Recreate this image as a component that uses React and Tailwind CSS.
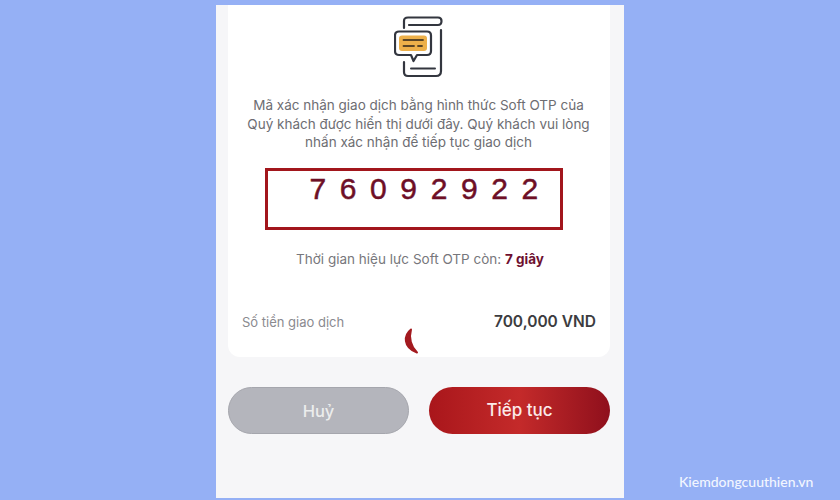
import React from 'react';

const font = { fontFamily: 'Inter, "Noto Sans", sans-serif' };

const OtpIcon = () => (
  <svg width="50" height="62" viewBox="0 0 50 62" fill="none" className="block">
    {/* phone body, top cap */}
    <path d="M10 12 V5 Q10 1.5 14 1.5 H44 Q47.5 1.5 47.5 5 Q47.5 9 44 9 H15" stroke="#33363f" strokeWidth="2.2" strokeLinecap="round" strokeLinejoin="round" />
    {/* right side and bottom */}
    <path d="M47 14 V55 Q47 60 42 60 H14 Q10 60 10 56 V46" stroke="#33363f" strokeWidth="2.2" strokeLinecap="round" />
    <path d="M17 52.5 H41" stroke="#33363f" strokeWidth="2" strokeLinecap="round" />
    {/* chat bubble */}
    <path d="M5 15.5 H33 Q37 15.5 37 19.5 V35 Q37 39 33 39 H23 L19.5 45 L17 39 H5 Q1 39 1 35 V19.5 Q1 15.5 5 15.5 Z" fill="#fff" stroke="#33363f" strokeWidth="2.2" strokeLinejoin="round" />
    <rect x="5" y="19.5" width="28" height="15.5" rx="3" fill="#edb04a" />
    <path d="M9.5 24 H29 M9.5 30 H20 M24 30 H28" stroke="#5a4526" strokeWidth="1.8" strokeLinecap="round" />
  </svg>
);

const Spinner = () => (
  <svg width="18" height="28" viewBox="0 0 18 28" fill="none" className="block">
    <path d="M9 2.5 C2 8 0.5 20 15 25.5 C9 20 6.5 11 9 2.5 Z" fill="#a31a1f" stroke="#a31a1f" strokeWidth="2" strokeLinejoin="round" />
  </svg>
);

export default function App() {
  return (
    <div className="relative w-[840px] h-[500px] overflow-hidden bg-[#95b0f5] flex justify-center" style={font}>
      <div className="relative mt-[5px] w-[408px] h-[493px] bg-[#f6f6f8] pl-3 pr-[14px] flex flex-col">
        {/* card */}
        <div className="relative h-[352px] bg-white rounded-b-xl flex flex-col items-center">
          <div className="mt-[11px]"><OtpIcon /></div>

          <p className="mt-[18px] ml-[-1px] w-[382px] text-center text-[13.5px] leading-[18.5px] text-[#6d6d72]">
            Mã xác nhận giao dịch bằng hình thức Soft OTP của
            <br />
            Quý khách được hiển thị dưới đây. Quý khách vui lòng
            <br />
            nhấn xác nhận để tiếp tục giao dịch
          </p>

          <div className="mt-[16px] ml-[-11px] w-[298px] h-[62px] border-[3px] border-[#a2161c] pl-[42px] pt-[1px]">
            <span className="block text-[30px] leading-[34px] tracking-[13.6px] whitespace-nowrap text-[#6e0f26] [-webkit-text-stroke:0.5px_#6e0f26]" style={{ fontFamily: '"Liberation Sans", sans-serif' }}>
              76092922
            </span>
          </div>

          <p className="mt-[20px] ml-[2px] text-[13.5px] leading-[18px] text-[#77777c]">
            Thời gian hiệu lực Soft OTP còn: <span className="font-bold text-[#6e1030]">7 giây</span>
          </p>

          <div className="mt-[44px] w-full pl-[14px] pr-[14px] flex items-center justify-between">
            <span className="text-[13px] leading-[18px] text-[#8a8a8f]">Số tiền giao dịch</span>
            <span className="text-[15.5px] leading-[20px] font-semibold text-[#3c3c40]">700,000 VND</span>
          </div>

          {/* loading spinner lying over the card */}
          <div className="absolute left-[174px] top-[322px]"><Spinner /></div>
        </div>

        {/* buttons */}
        <div className="mt-[30px] flex justify-between">
          <button className="w-[181px] h-[47px] pt-px rounded-full bg-[#b4b5bc] border border-[#a5a6ad] text-[16.5px] font-medium text-[#eceded]">
            Huỷ
          </button>
          <button className="w-[181px] h-[47px] pt-px rounded-full bg-gradient-to-r from-[#a9161b] via-[#c42a2a] to-[#8f0f1c] text-[17px] font-medium text-[#fbeaea]">
            Tiếp tục
          </button>
        </div>
      </div>

      {/* watermark */}
      <span className="absolute left-[679px] top-[472px] text-[14px] leading-[20px] font-medium text-[#f2f6ff]" style={{ fontFamily: 'Lato, sans-serif' }}>
        Kiemdongcuuthien.vn
      </span>
    </div>
  );
}
